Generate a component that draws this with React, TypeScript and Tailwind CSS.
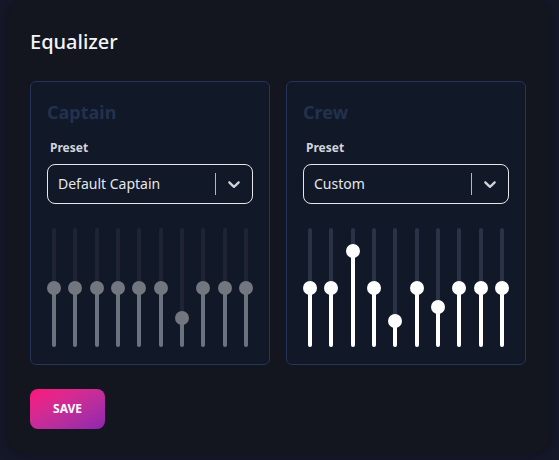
import React from 'react';

// thumb centre, px from the top of a 119px track
const captainBands = [60, 60, 60, 60, 60, 60, 90, 60, 60, 60];
const crewBands = [60, 60, 23, 60, 93, 60, 79, 60, 60, 60];

function Chevron() {
  return (
    <svg viewBox="0 0 20 20" className="h-5 w-5 fill-[#d1d5db]">
      <path d="M4.516 7.548c0.436-0.446 1.043-0.481 1.576 0l3.908 3.747 3.908-3.747c0.533-0.481 1.141-0.446 1.574 0 0.436 0.445 0.408 1.197 0 1.615-0.406 0.418-4.695 4.502-4.695 4.502-0.217 0.223-0.502 0.335-0.787 0.335s-0.57-0.112-0.789-0.335c0 0-4.287-4.084-4.695-4.502s-0.436-1.17 0-1.615z" />
    </svg>
  );
}

function Band({ pos, active }: { pos: number; active: boolean }) {
  return (
    <div className="relative h-[119px] w-[14px]">
      <div
        className={`absolute left-[5px] top-0 h-full w-[4px] rounded-full ${
          active ? 'bg-[#2b3245]' : 'bg-[#1e2434]'
        }`}
      />
      <div
        className={`absolute left-[5px] bottom-0 w-[4px] rounded-full ${
          active ? 'bg-white' : 'bg-[#6b7280]'
        }`}
        style={{ top: pos }}
      />
      <div
        className={`absolute left-0 h-[14px] w-[14px] rounded-full ${
          active ? 'bg-white' : 'bg-[#72767f]'
        }`}
        style={{ top: pos - 7 }}
      />
    </div>
  );
}

function Panel({
  title,
  preset,
  bands,
  active,
}: {
  title: string;
  preset: string;
  bands: number[];
  active: boolean;
}) {
  return (
    <div className="w-[240px] rounded-md border border-[#24345a] bg-[#111827] px-4 pt-4 pb-[17px]">
      <h3 className="text-lg leading-7 font-bold text-[#22314e]">{title}</h3>
      <p className="mt-[14px] pl-[3px] text-xs leading-4 font-bold text-[#d1d5db]">Preset</p>
      <div className="mt-2 flex h-10 items-center rounded-lg border border-[#e5e7eb]">
        <span className="flex-1 pl-[10px] text-sm text-[#e5e7eb]">{preset}</span>
        <span className="my-2 w-px self-stretch bg-[#b3b7bf]" />
        <span className="flex w-[36px] justify-center">
          <Chevron />
        </span>
      </div>
      <div className="mt-6 flex justify-between">
        {bands.map((pos, i) => (
          <Band key={i} pos={pos} active={active} />
        ))}
      </div>
    </div>
  );
}

export default function App() {
  return (
    <div className="min-h-screen bg-[#151829] px-2 font-['Noto_Sans',sans-serif]">
      <div className="h-[453px] w-[542px] rounded-2xl bg-[#13161f] pt-7 pl-[22px] shadow-[0_0_12px_rgba(0,0,0,0.35)]">
        <h2 className="text-xl leading-7 font-medium text-[#f3f4f6]">Equalizer</h2>
        <div className="mt-[25px] flex gap-4">
          <Panel title="Captain" preset="Default Captain" bands={captainBands} active={false} />
          <Panel title="Crew" preset="Custom" bands={crewBands} active />
        </div>
        <button className="mt-6 flex h-10 w-[75px] items-center justify-center rounded-lg bg-linear-to-br from-[#ff0f7b] to-[#8e24b0] text-xs font-bold text-white">
          SAVE
        </button>
      </div>
    </div>
  );
}
